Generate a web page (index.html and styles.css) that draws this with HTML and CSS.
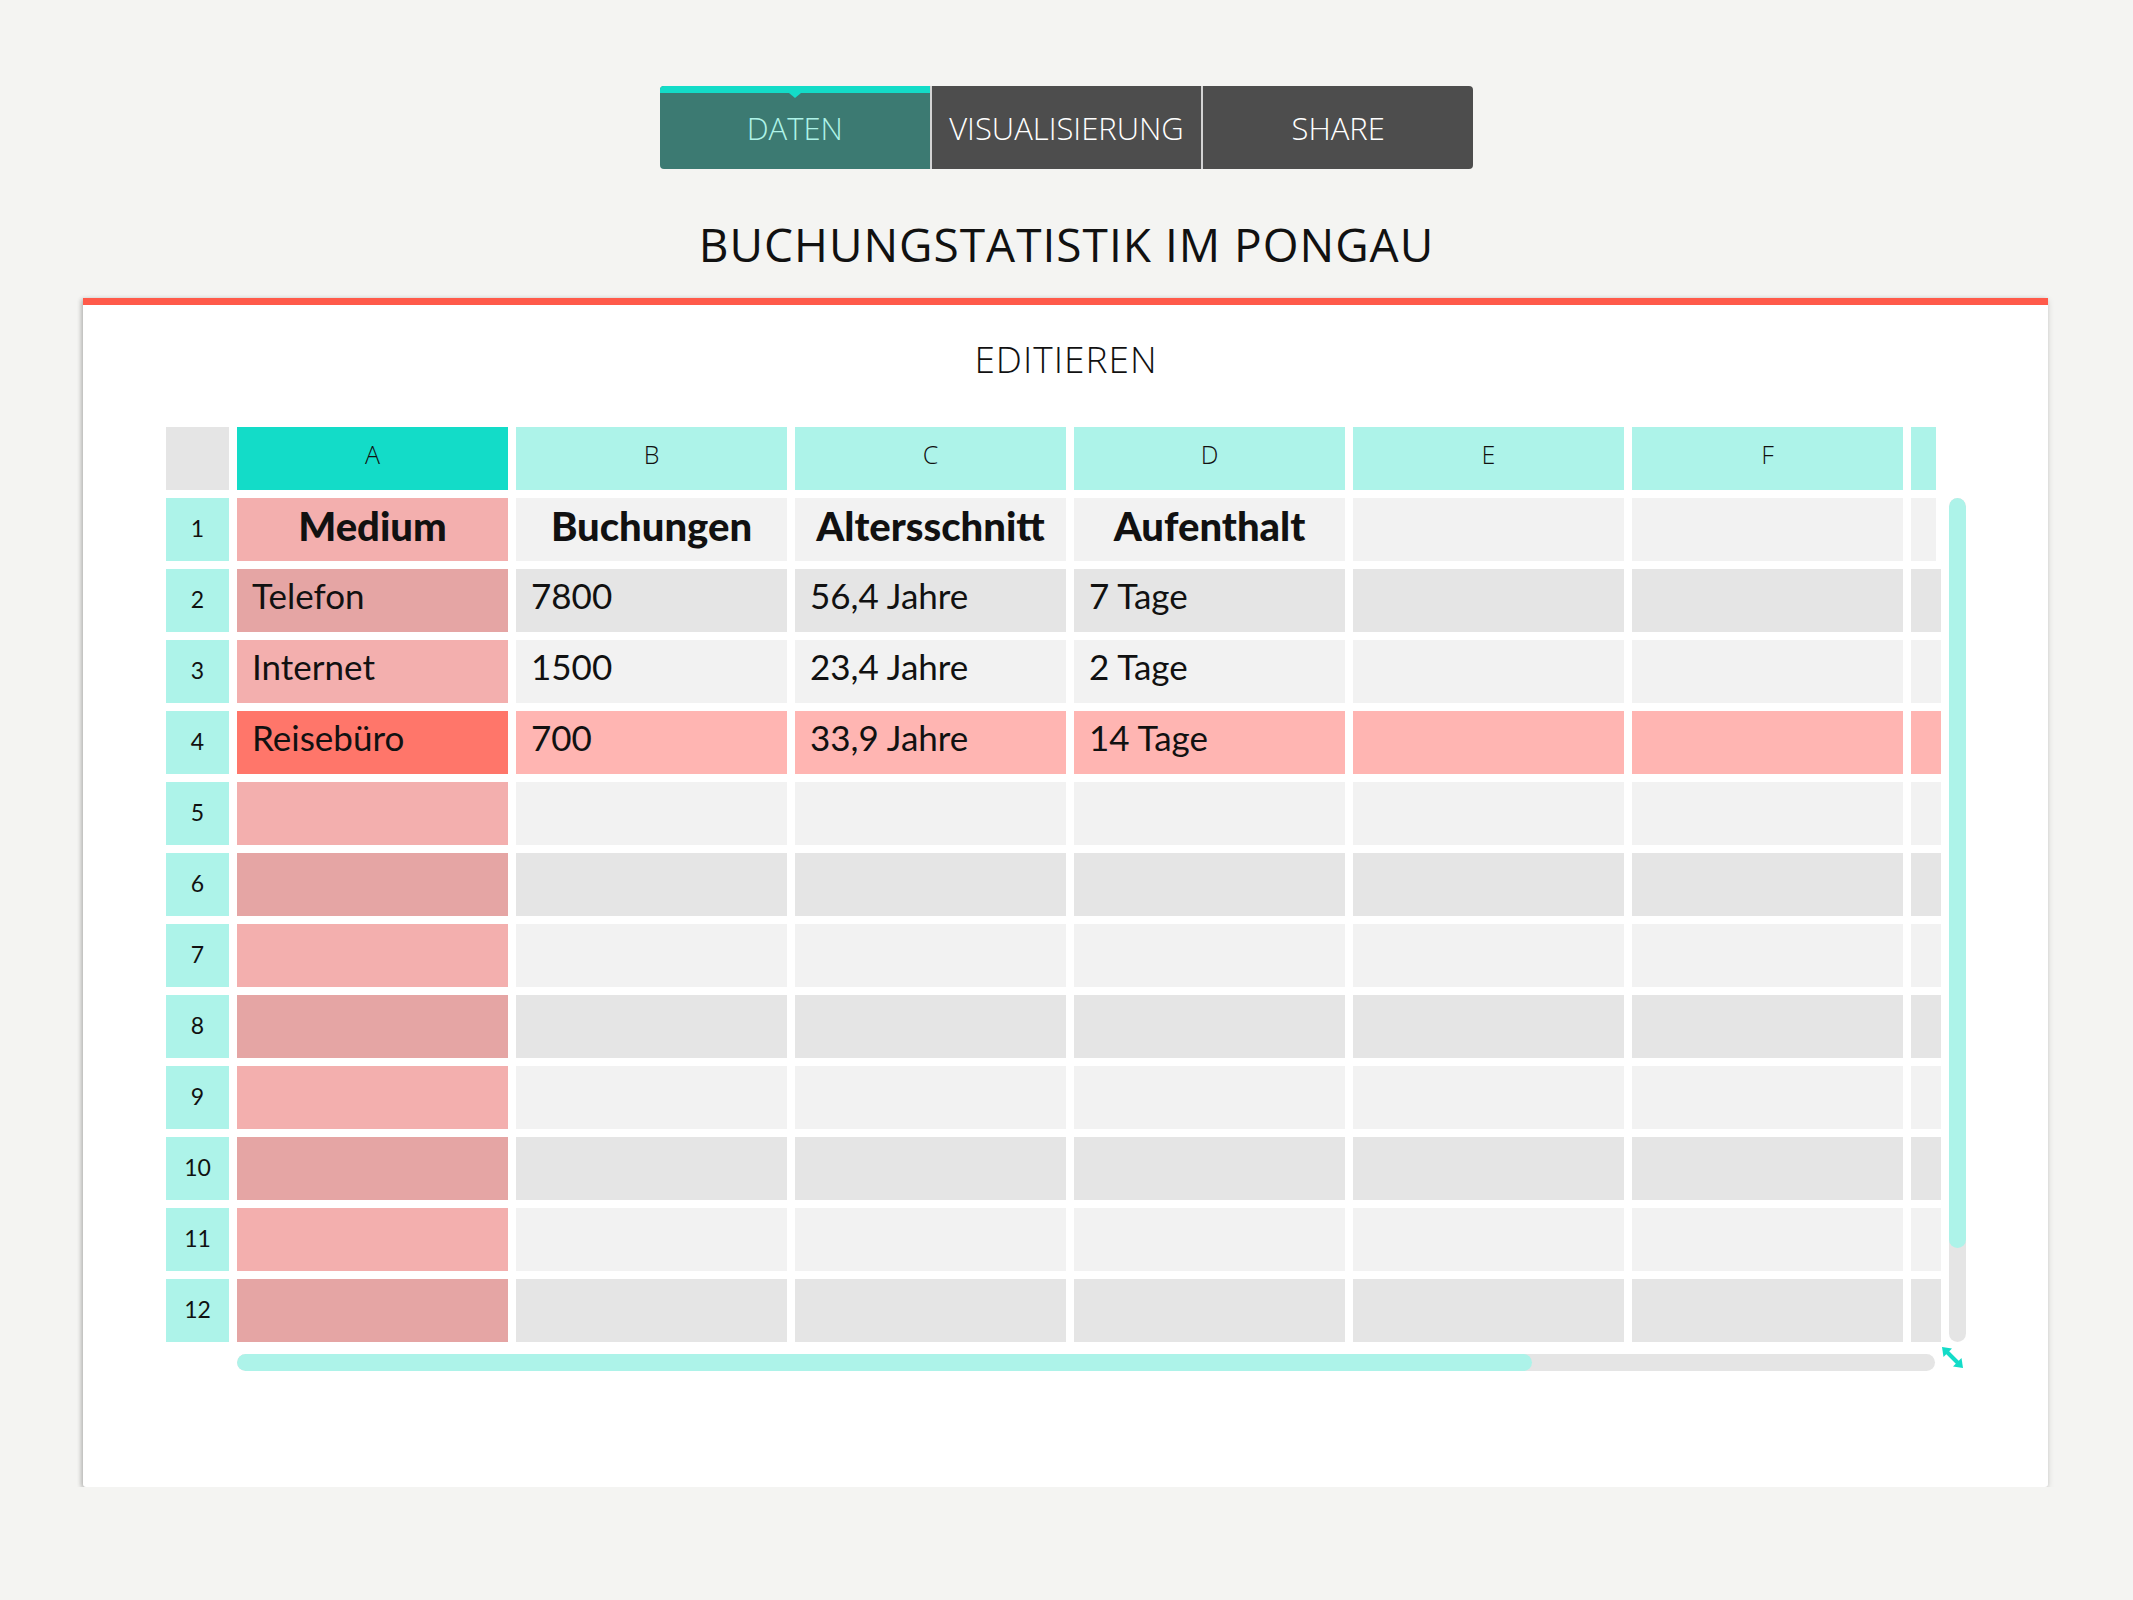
FILE: index.html
```html
<!DOCTYPE html>
<html lang="de">
<head>
<meta charset="utf-8">
<title>Buchungsstatistik im Pongau</title>
<link rel="stylesheet" href="styles.css">
</head>
<body>
<nav class="tabs">
  <div class="tab active">DATEN</div>
  <div class="tab">VISUALISIERUNG</div>
  <div class="tab">SHARE</div>
</nav>
<h1 class="title">BUCHUNGSTATISTIK IM PONGAU</h1>
<section class="card">
  <h2 class="subtitle">EDITIEREN</h2>
  <div class="sheet">
    <div class="table">
      <div class="row head">
        <div class="c corner"></div>
        <div class="c colhead active">A</div>
        <div class="c colhead">B</div>
        <div class="c colhead">C</div>
        <div class="c colhead">D</div>
        <div class="c colhead">E</div>
        <div class="c colhead">F</div>
        <div class="c colhead"></div>
      </div>
      <div class="row odd th">
        <div class="c num">1</div>
        <div class="c a">Medium</div>
        <div class="c">Buchungen</div>
        <div class="c">Altersschnitt</div>
        <div class="c">Aufenthalt</div>
        <div class="c"></div>
        <div class="c"></div>
        <div class="c"></div>
      </div>
      <div class="row even">
        <div class="c num">2</div>
        <div class="c a">Telefon</div>
        <div class="c">7800</div>
        <div class="c">56,4 Jahre</div>
        <div class="c">7 Tage</div>
        <div class="c"></div>
        <div class="c"></div>
        <div class="c"></div>
      </div>
      <div class="row odd">
        <div class="c num">3</div>
        <div class="c a">Internet</div>
        <div class="c">1500</div>
        <div class="c">23,4 Jahre</div>
        <div class="c">2 Tage</div>
        <div class="c"></div>
        <div class="c"></div>
        <div class="c"></div>
      </div>
      <div class="row sel">
        <div class="c num">4</div>
        <div class="c a">Reisebüro</div>
        <div class="c">700</div>
        <div class="c">33,9 Jahre</div>
        <div class="c">14 Tage</div>
        <div class="c"></div>
        <div class="c"></div>
        <div class="c"></div>
      </div>
      <div class="row odd">
        <div class="c num">5</div><div class="c a"></div><div class="c"></div><div class="c"></div><div class="c"></div><div class="c"></div><div class="c"></div><div class="c"></div>
      </div>
      <div class="row even">
        <div class="c num">6</div><div class="c a"></div><div class="c"></div><div class="c"></div><div class="c"></div><div class="c"></div><div class="c"></div><div class="c"></div>
      </div>
      <div class="row odd">
        <div class="c num">7</div><div class="c a"></div><div class="c"></div><div class="c"></div><div class="c"></div><div class="c"></div><div class="c"></div><div class="c"></div>
      </div>
      <div class="row even">
        <div class="c num">8</div><div class="c a"></div><div class="c"></div><div class="c"></div><div class="c"></div><div class="c"></div><div class="c"></div><div class="c"></div>
      </div>
      <div class="row odd">
        <div class="c num">9</div><div class="c a"></div><div class="c"></div><div class="c"></div><div class="c"></div><div class="c"></div><div class="c"></div><div class="c"></div>
      </div>
      <div class="row even">
        <div class="c num">10</div><div class="c a"></div><div class="c"></div><div class="c"></div><div class="c"></div><div class="c"></div><div class="c"></div><div class="c"></div>
      </div>
      <div class="row odd">
        <div class="c num">11</div><div class="c a"></div><div class="c"></div><div class="c"></div><div class="c"></div><div class="c"></div><div class="c"></div><div class="c"></div>
      </div>
      <div class="row even">
        <div class="c num">12</div><div class="c a"></div><div class="c"></div><div class="c"></div><div class="c"></div><div class="c"></div><div class="c"></div><div class="c"></div>
      </div>
    </div>
    <div class="vbar"><div class="vthumb"></div></div>
    <div class="hbar"><div class="htrack"><div class="hthumb"></div></div></div>
    <div class="resize">
      <svg width="21" height="21" viewBox="0 0 21 21" aria-hidden="true">
        <polygon points="0,0 10,1.5 1.5,10" fill="#13dcc8"/>
        <line x1="4" y1="4" x2="17" y2="17" stroke="#13dcc8" stroke-width="4"/>
        <polygon points="21,21 11,19.5 19.5,11" fill="#13dcc8"/>
      </svg>
    </div>
  </div>
</section>
</body>
</html>
```

FILE: styles.css
```css
body {
  margin: 0;
  background: #f4f4f2;
  font-family: "Open Sans", "Noto Sans", sans-serif;
  color: #111;
}

.tabs {
  width: 813px;
  height: 83px;
  margin: 86px auto 0;
  display: flex;
  border-radius: 4px;
  overflow: hidden;
}

.tab {
  flex: 1;
  display: flex;
  align-items: center;
  justify-content: center;
  background: #4d4d4d;
  color: #ffffff;
  font-weight: 300;
  font-size: 31px;
  position: relative;
}

.tab + .tab {
  border-left: 2px solid #d4d4d4;
}

.tab.active {
  background: #3c7a72;
  color: #aef3e8;
}

.tab.active::before {
  content: "";
  position: absolute;
  left: 0;
  right: 0;
  top: 0;
  height: 7px;
  background: #13dcc8;
}

.tab.active::after {
  content: "";
  position: absolute;
  top: 7px;
  left: 50%;
  margin-left: -6px;
  border-left: 6px solid transparent;
  border-right: 6px solid transparent;
  border-top: 5px solid #13dcc8;
}

.title {
  margin: 45px 0 24px;
  text-align: center;
  font-size: 46px;
  line-height: 60px;
  font-weight: 400;
  letter-spacing: 1px;
  color: #111;
}

.card {
  width: 1965px;
  margin-left: 83px;
  box-sizing: border-box;
  background: #fff;
  border-top: 7px solid #ff5a4a;
  border-radius: 0 0 3px 3px;
  box-shadow: -2px 1px 4px rgba(0, 0, 0, 0.18), 0 2px 6px rgba(0, 0, 0, 0.15);
  padding: 29px 82px 116px 83px;
}

.subtitle {
  margin: 0 0 43px;
  text-align: center;
  font-size: 37px;
  line-height: 50px;
  font-weight: 300;
  letter-spacing: 1px;
  color: #111;
}

.sheet {
  display: grid;
  grid-template-columns: 1770px 17px;
  column-gap: 13px;
}

.table {
  display: grid;
  grid-template-columns: 63px repeat(6, 271px) 25px;
  grid-auto-rows: 63px;
  gap: 8px;
}

.row {
  display: contents;
}

.c {
  display: flex;
  align-items: center;
  box-sizing: border-box;
  padding: 0 15px 11px;
  font-family: Lato, "Open Sans", sans-serif;
  font-size: 35px;
  color: #111;
  white-space: nowrap;
  overflow: hidden;
}

.row.odd .c { background: #f2f2f2; }
.row.even .c { background: #e5e5e5; }
.row.sel .c { background: #ffb5b2; }
.row.odd .c.a { background: #f3afae; }
.row.even .c.a { background: #e5a5a4; }
.row.sel .c.a { background: #ff766a; }

.row .c.num {
  background: #adf3e9;
  justify-content: center;
  padding: 0 0 4px;
  font-size: 23px;
}

.row.th .c {
  justify-content: center;
  font-weight: 900;
  font-size: 40px;
  padding: 0 0 8px;
}

.row.th .c.num {
  font-weight: 400;
  font-size: 23px;
  padding: 0 0 4px;
}

.c.corner {
  background: #e5e5e5;
}

.c.colhead {
  background: #adf3e9;
  justify-content: center;
  padding: 0 0 9px;
  font-family: "Open Sans", sans-serif;
  font-weight: 300;
  font-size: 25px;
}

.c.colhead.active {
  background: #13dcc8;
}

.vbar {
  margin-top: 71px;
  height: 844px;
  border-radius: 9px;
  background: #e5e5e5;
  overflow: hidden;
}

.vthumb {
  height: 750px;
  border-radius: 9px;
  background: #adf3e9;
}

.hbar {
  margin-top: 12px;
  padding-left: 71px;
}

.htrack {
  width: 1698px;
  height: 17px;
  border-radius: 9px;
  background: #e5e5e5;
  overflow: hidden;
}

.hthumb {
  width: 1295px;
  height: 17px;
  border-radius: 9px;
  background: #adf3e9;
}

.resize {
  margin: 5px 0 0 -7px;
  width: 21px;
  height: 21px;
  line-height: 0;
}
```
